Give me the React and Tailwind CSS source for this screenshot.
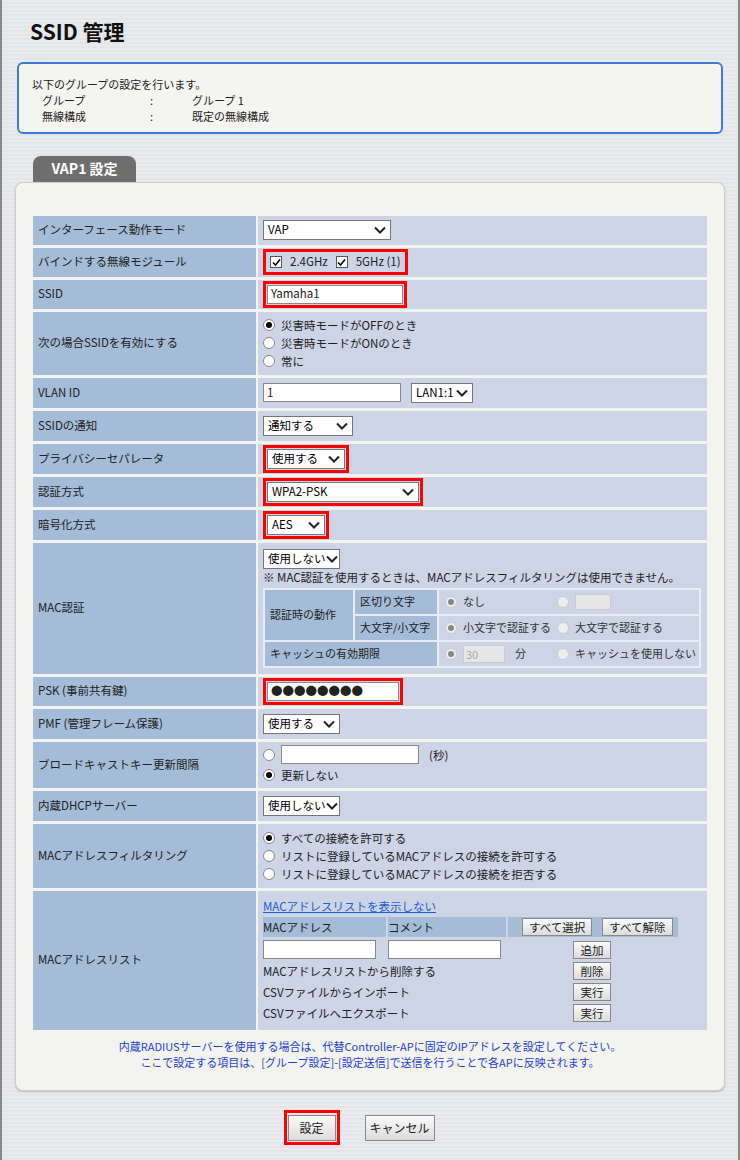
import React from "react";

const F = { fontFamily: '"Noto Sans CJK JP", "Liberation Sans", sans-serif' };

function Sel({ w, children }) {
  return (
    <div className={`inline-flex items-center justify-between h-[20px] bg-white border border-[#767676] px-[4px] text-[11.5px] text-black whitespace-nowrap`} style={{ width: w }}>
      <span>{children}</span>
      <svg width="12" height="8" viewBox="0 0 12 8" className="shrink-0"><path d="M1 1.5 L6 6.5 L11 1.5" stroke="#222" strokeWidth="2" fill="none" /></svg>
    </div>
  );
}
function Red({ children, cls = "" }) {
  return <div className={`inline-flex items-center border-[3px] border-[#ff0000] p-[1px] ${cls}`}>{children}</div>;
}
function Radio({ on, dis }) {
  return (
    <span className={`inline-flex shrink-0 items-center justify-center w-[12px] h-[12px] rounded-full border ${dis ? "border-[#ccc] bg-[#eee]" : "border-[#888] bg-white"} mr-[6px]`}>
      {on && <span className={`w-[6px] h-[6px] rounded-full ${dis ? "bg-[#888]" : "bg-black"}`} />}
    </span>
  );
}
function Check() {
  return (
    <span className="inline-flex items-center justify-center w-[12px] h-[12px] border border-[#555] bg-white mr-[8px]">
      <svg width="9" height="9" viewBox="0 0 9 9"><path d="M1 4.5 L3.5 7 L8 1.5" stroke="#000" strokeWidth="1.6" fill="none" /></svg>
    </span>
  );
}
function Btn({ children, cls = "" }) {
  return <span className={`inline-flex items-center justify-center h-[18px] px-[6px] border border-[#888] bg-gradient-to-b from-[#fafafa] to-[#dcdcdc] text-[11.5px] whitespace-nowrap ${cls}`}>{children}</span>;
}
function Row({ label, h, children }) {
  return (
    <div className="grid grid-cols-[223px_1fr] gap-[2px] overflow-hidden" style={{ height: h }}>
      <div className="bg-[#a4bcd8] flex items-center pl-[5px] text-[11.5px] text-[#222] whitespace-nowrap">{label}</div>
      <div className="bg-[#ccd4e6] flex flex-col justify-center px-[5px] text-[11.5px] text-[#222] whitespace-nowrap">{children}</div>
    </div>
  );
}
const Inp = ({ w, children, cls = "" }) => (
  <div className={`h-[19px] bg-white border border-[#888] px-[3px] flex items-center text-[11.5px] ${cls}`} style={{ width: w }}>{children}</div>
);

export default function App() {
  return (
    <div style={F} className="w-[740px] h-[1160px] border-x-[2px] border-[#888] bg-[repeating-linear-gradient(180deg,#e9eaec_0px,#e9eaec_2px,#dfe0e3_3px,#e9eaec_4px)] text-[#222] overflow-hidden">
      <div className="pt-[16px] pl-[28px] text-[21px] font-bold text-[#111]">SSID 管理</div>
      <div className="mx-[15px] mt-[14px] h-[72px] rounded-[6px] border-2 border-[#3c7ad8] bg-[#f4f4f0] pl-[13px] pt-[12px] text-[11px] leading-[16px]">
        <div>以下のグループの設定を行います。</div>
        <div className="flex pl-[10px]"><span className="w-[108px]">グループ</span><span className="w-[42px]">:</span><span>グループ 1</span></div>
        <div className="flex pl-[10px]"><span className="w-[108px]">無線構成</span><span className="w-[42px]">:</span><span>既定の無線構成</span></div>
      </div>
      <div className="ml-[31px] mt-[22px] w-[103px] h-[26px] rounded-t-[8px] bg-[#6e6e6e] text-white font-bold text-[14px] flex items-center justify-center">VAP1 設定</div>
      <div className="mx-[13px] rounded-[8px] border border-[#cfcfcf] bg-[#f3f3ef] pt-[33px] pb-[20px] px-[17px] shadow-[0_1px_2px_#bbb]">
        <div className="flex flex-col gap-[3px]">
          <Row label="インターフェース動作モード" h={29}><Sel w={128}>VAP</Sel></Row>
          <Row label="バインドする無線モジュール" h={29}>
            <div><Red cls="px-[4px]"><Check />2.4GHz<span className="w-[8px]" /><Check />5GHz (1)</Red></div>
          </Row>
          <Row label="SSID" h={29}><div><Red><Inp w={136} cls="h-[17px]">Yamaha1</Inp></Red></div></Row>
          <Row label="次の場合SSIDを有効にする" h={63}>
            <div className="leading-[18px]">
              <div className="flex items-center"><Radio on />災害時モードがOFFのとき</div>
              <div className="flex items-center"><Radio />災害時モードがONのとき</div>
              <div className="flex items-center"><Radio />常に</div>
            </div>
          </Row>
          <Row label="VLAN ID" h={30}><div className="flex items-center gap-[10px]"><Inp w={138}>1</Inp><Sel w={62}>LAN1:1</Sel></div></Row>
          <Row label="SSIDの通知" h={30}><Sel w={90}>通知する</Sel></Row>
          <Row label="プライバシーセパレータ" h={30}><div><Red><Sel w={78}>使用する</Sel></Red></div></Row>
          <Row label="認証方式" h={30}><div><Red><Sel w={152}>WPA2-PSK</Sel></Red></div></Row>
          <Row label="暗号化方式" h={30}><div><Red><Sel w={58}>AES</Sel></Red></div></Row>
          <Row label="MAC認証" h={131}>
            <div>
              <Sel w={77}>使用しない</Sel>
              <div className="mt-[1px] mb-[3px] leading-[15px]">※ MAC認証を使用するときは、MACアドレスフィルタリングは使用できません。</div>
              <div className="grid grid-cols-[88px_82px_1fr] gap-[2px] border-2 border-[#e8ecf4] bg-[#e8ecf4] mr-[1px] text-[11px]">
                <div className="row-span-2 bg-[#a4bcd8] flex items-center pl-[5px]">認証時の動作</div>
                <div className="bg-[#a4bcd8] h-[24px] flex items-center pl-[5px]">区切り文字</div>
                <div className="bg-[#ccd4e6] flex items-center pl-[6px] text-[#333]"><span className="w-[112px] flex items-center"><Radio on dis />なし</span><Radio dis /><span className="w-[36px] h-[16px] bg-[#e6e6e6] border border-[#ccc]" /></div>
                <div className="bg-[#a4bcd8] h-[24px] flex items-center pl-[5px]">大文字/小文字</div>
                <div className="bg-[#ccd4e6] flex items-center pl-[6px] text-[#333]"><span className="w-[112px] flex items-center"><Radio on dis />小文字で認証する</span><Radio dis />大文字で認証する</div>
                <div className="col-span-2 bg-[#a4bcd8] h-[24px] flex items-center pl-[5px]">キャッシュの有効期限</div>
                <div className="bg-[#ccd4e6] flex items-center pl-[6px] text-[#333]"><span className="w-[112px] flex items-center"><Radio on dis /><span className="w-[42px] h-[18px] bg-[#e6e6e6] border border-[#ccc] text-[#aaa] pl-[2px] mr-[10px]">30</span>分</span><Radio dis />キャッシュを使用しない</div>
              </div>
            </div>
          </Row>
          <Row label="PSK (事前共有鍵)" h={29}><div><Red><Inp w={132} cls="h-[17px] text-[9px] tracking-[0px]">●●●●●●●●</Inp></Red></div></Row>
          <Row label="PMF (管理フレーム保護)" h={30}><Sel w={77}>使用する</Sel></Row>
          <Row label="ブロードキャストキー更新間隔" h={46}>
            <div className="leading-[20px]">
              <div className="flex items-center"><Radio /><Inp w={138} cls="mr-[10px]" />(秒)</div>
              <div className="flex items-center"><Radio on />更新しない</div>
            </div>
          </Row>
          <Row label="内蔵DHCPサーバー" h={30}><Sel w={77}>使用しない</Sel></Row>
          <Row label="MACアドレスフィルタリング" h={64}>
            <div className="leading-[18px]">
              <div className="flex items-center"><Radio on />すべての接続を許可する</div>
              <div className="flex items-center"><Radio />リストに登録しているMACアドレスの接続を許可する</div>
              <div className="flex items-center"><Radio />リストに登録しているMACアドレスの接続を拒否する</div>
            </div>
          </Row>
          <Row label="MACアドレスリスト" h={139}>
            <div className="leading-[18px]">
              <div className="text-[#1a5fd6] underline mb-[2px]">MACアドレスリストを表示しない</div>
              <div className="grid grid-cols-[123px_2px_118px_2px_170px] w-[415px] h-[20px] mb-[2px]">
                <div className="bg-[#a4bcd8] flex items-center">MACアドレス</div><div />
                <div className="bg-[#a4bcd8] flex items-center">コメント</div><div />
                <div className="bg-[#a4bcd8] flex items-center gap-[10px] pl-[14px]"><Btn>すべて選択</Btn><Btn>すべて解除</Btn></div>
              </div>
              <div className="flex items-center h-[21px]"><Inp w={113} cls="h-[15px]" /><Inp w={113} cls="h-[15px] ml-[12px]" /><Btn cls="ml-[72px] w-[38px]">追加</Btn></div>
              <div className="flex items-center h-[21px]"><span className="w-[310px]">MACアドレスリストから削除する</span><Btn cls="w-[38px]">削除</Btn></div>
              <div className="flex items-center h-[21px]"><span className="w-[310px]">CSVファイルからインポート</span><Btn cls="w-[38px]">実行</Btn></div>
              <div className="flex items-center h-[21px]"><span className="w-[310px]">CSVファイルへエクスポート</span><Btn cls="w-[38px]">実行</Btn></div>
            </div>
          </Row>
        </div>
        <div className="text-center text-[#1f3fd0] text-[11px] leading-[16px] mt-[8px]">
          <div>内蔵RADIUSサーバーを使用する場合は、代替Controller-APに固定のIPアドレスを設定してください。</div>
          <div>ここで設定する項目は、[グループ設定]-[設定送信]で送信を行うことで各APに反映されます。</div>
        </div>
      </div>
      <div className="flex justify-center gap-[25px] mt-[19px] pr-[22px]">
        <div className="border-[3px] border-[#ff0000] p-[1px]"><span className="inline-flex items-center justify-center w-[48px] h-[26px] border border-[#888] bg-gradient-to-b from-[#fafafa] to-[#dcdcdc] text-[12px]">設定</span></div>
        <div className="pt-[4px]"><span className="inline-flex items-center justify-center w-[70px] h-[26px] border border-[#888] bg-gradient-to-b from-[#fafafa] to-[#dcdcdc] text-[12px]">キャンセル</span></div>
      </div>
    </div>
  );
}
